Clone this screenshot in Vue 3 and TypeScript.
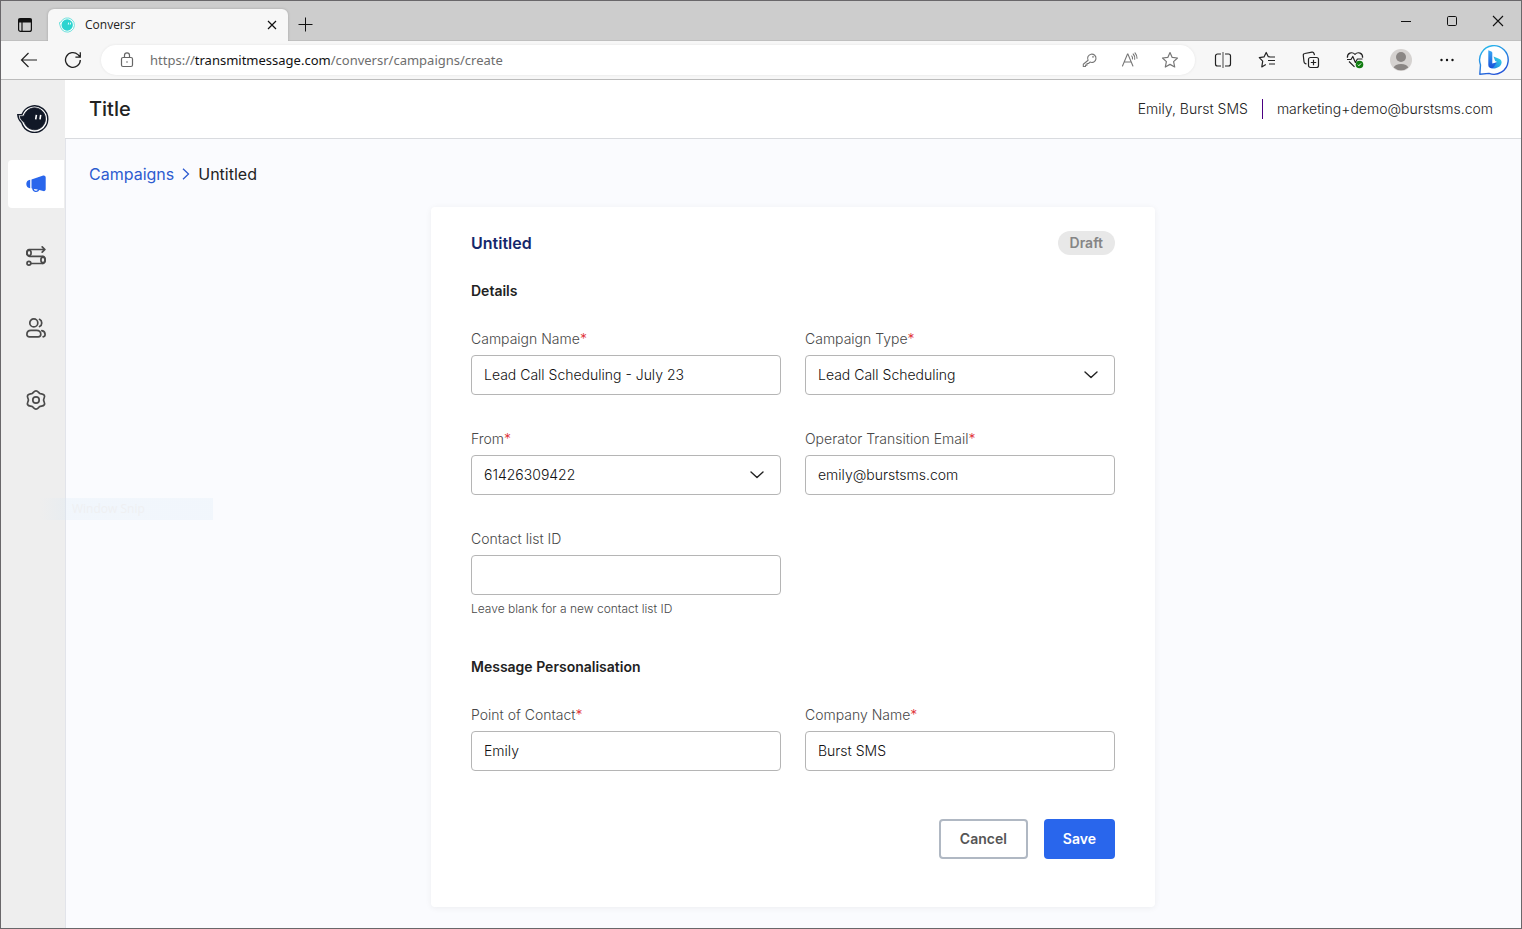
<script setup lang="ts">
import { ref } from 'vue'

interface Field {
  id: string
  label: string
  required: boolean
  kind: 'text' | 'email' | 'select'
  value: string
  hint?: string
}

interface Section {
  title: string
  fields: Field[]
}

const sections = ref<Section[]>([
  {
    title: 'Details',
    fields: [
      { id: 'campaign-name', label: 'Campaign Name', required: true, kind: 'text', value: 'Lead Call Scheduling - July 23' },
      { id: 'campaign-type', label: 'Campaign Type', required: true, kind: 'select', value: 'Lead Call Scheduling' },
      { id: 'from', label: 'From', required: true, kind: 'select', value: '61426309422' },
      { id: 'operator-email', label: 'Operator Transition Email', required: true, kind: 'email', value: 'emily@burstsms.com' },
      { id: 'contact-list', label: 'Contact list ID', required: false, kind: 'text', value: '', hint: 'Leave blank for a new contact list ID' },
    ],
  },
  {
    title: 'Message Personalisation',
    fields: [
      { id: 'contact', label: 'Point of Contact', required: true, kind: 'text', value: 'Emily' },
      { id: 'company', label: 'Company Name', required: true, kind: 'text', value: 'Burst SMS' },
    ],
  },
])
</script>

<template>
  <div class="window">
    <div class="titlebar">
      <button class="icon-btn tab-actions" aria-label="Tab actions">
        <svg width="14" height="14" viewBox="0 0 14 14" fill="none" stroke="#111" stroke-width="1.2">
          <rect x=".6" y=".6" width="12.8" height="12.8" rx="2" />
          <path d="M1 1h12v3H1z" fill="#111" />
          <path d="M4 4v9.4" />
        </svg>
      </button>
      <div class="tab">
        <svg width="16" height="16" viewBox="0 0 16 16">
          <path d="M.3 5.600 1.800 5.200A7.100 7.100 0 1 1 1.500 10Z" fill="#fff" stroke="#5fdcd8" stroke-width=".9" />
          <circle cx="8.200" cy="8" r="5.700" fill="#2bd4d0" />
          <path d="m9.600 5.600-.3 2M11.600 5.600l-.3 2" stroke="#fff" stroke-width=".9" />
        </svg>
        <span class="tab-title">Conversr</span>
        <button class="icon-btn" aria-label="Close tab">
          <svg width="10" height="10" viewBox="0 0 10 10" stroke="#111" stroke-width="1.200"><path d="m1 1 8 8M9 1 1 9" /></svg>
        </button>
      </div>
      <button class="icon-btn new-tab" aria-label="New tab">
        <svg width="15" height="15" viewBox="0 0 15 15" stroke="#111"><path d="M7.500 0.500v14M.5 7.500h14" /></svg>
      </button>
      <div class="window-controls">
        <button class="icon-btn" aria-label="Minimise">
          <svg width="12" height="12" viewBox="0 0 12 12" stroke="#111"><path d="M1 6.500h10" /></svg>
        </button>
        <button class="icon-btn" aria-label="Maximise">
          <svg width="12" height="12" viewBox="0 0 12 12" fill="none" stroke="#111"><rect x="1.500" y="1.500" width="9" height="9" rx="1.200" /></svg>
        </button>
        <button class="icon-btn" aria-label="Close window">
          <svg width="12" height="12" viewBox="0 0 12 12" stroke="#111" stroke-width="1.100"><path d="m1 1 10 10M11 1 1 11" /></svg>
        </button>
      </div>
    </div>

    <div class="toolbar">
      <button class="icon-btn back" aria-label="Back">
        <svg width="18" height="16" viewBox="0 0 18 16" fill="none" stroke="#222" stroke-width="1.200"><path d="M17 8H1.500M8.500 1 1.500 8l7 7" /></svg>
      </button>
      <button class="icon-btn reload" aria-label="Refresh">
        <svg width="18" height="18" viewBox="0 0 18 18" fill="none" stroke="#222" stroke-width="1.300"><path d="M16.300 9A7.400 7.400 0 1 1 14 3.600l2 2.200M16.300 1.200v4.900h-4.900" /></svg>
      </button>
      <div class="address">
        <button class="icon-btn lock" aria-label="Site information">
          <svg width="14" height="16" viewBox="0 0 14 16" fill="none" stroke="#666" stroke-width="1.200">
            <rect x="1.500" y="5.500" width="11" height="9" rx="1.500" />
            <path d="M4.500 5.500V3.300a2.500 2.500 0 0 1 5 0v2.200" />
            <circle cx="7" cy="10" r=".8" fill="#666" stroke="none" />
          </svg>
        </button>
        <div class="url" role="textbox" tabindex="0" aria-label="Address">https://<b>transmitmessage.com</b>/conversr/campaigns/create</div>
        <button class="icon-btn" aria-label="Passwords">
          <svg width="16" height="16" viewBox="0 0 16 16" fill="none" stroke="#777" stroke-width="1.100" stroke-linejoin="round">
            <path d="M6.100 8.300A4.200 4.200 0 1 1 8 10.100L6.500 11.500H5v1.600H3.500v1.400H1.300v-2.300z" />
            <circle cx="11" cy="4.900" r=".8" fill="#777" stroke="none" />
          </svg>
        </button>
        <button class="icon-btn" aria-label="Read aloud">
          <svg width="18" height="16" viewBox="0 0 18 16" fill="none" stroke="#777" stroke-width="1.100" stroke-linecap="round">
            <path d="M1.500 14 6.500 2h.4l5 12M3.300 10h6.800M10.800 4a4 4 0 0 1 .7 3M12.200 2a6 6 0 0 1 1.500 5.300M14 .8a8 8 0 0 1 2 5.400" />
          </svg>
        </button>
        <button class="icon-btn" aria-label="Add to favourites">
          <svg width="18" height="18" viewBox="0 0 18 18" fill="none" stroke="#777" stroke-width="1.200" stroke-linejoin="round"><path d="m9 1.500 2.200 4.900 5.300.6-3.900 3.600 1.100 5.400L9 13.400 4.300 16l1.100-5.400L1.500 7l5.300-.6z" /></svg>
        </button>
      </div>
      <div class="tools">
        <button class="icon-btn" aria-label="Split screen">
          <svg width="18" height="18" viewBox="0 0 18 18" fill="none" stroke="#222" stroke-width="1.200"><path d="M7 3H3.500a2 2 0 0 0-2 2v8a2 2 0 0 0 2 2H7M11 3h3.500a2 2 0 0 1 2 2v8a2 2 0 0 1-2 2H11" /><path d="M9 1v16" stroke="#666" /></svg>
        </button>
        <button class="icon-btn" aria-label="Favourites">
          <svg width="18" height="18" viewBox="0 0 18 18" fill="none" stroke="#222" stroke-width="1.200" stroke-linejoin="round"><path d="M12 5.900 10.300 5.700 8.200 1.500 6 5.900l-4.700.7 3.400 3.600-.9 5.700 4-2.300M11 6h6M10 9.500h7M11 13h6" /></svg>
        </button>
        <button class="icon-btn" aria-label="Collections">
          <svg width="18" height="18" viewBox="0 0 18 18" fill="none" stroke="#222" stroke-width="1.200"><rect x="6.500" y="6.500" width="10" height="10" rx="2" /><path d="M11.500 8.800v5.400M8.800 11.500h5.400M4.500 13 3.400 12.600A2 2 0 0 1 2 10.800L1.300 4.500a1.700 1.700 0 0 1 1.500-2L10 1.200a1.800 1.800 0 0 1 2 1.300l.5 1.700" /></svg>
        </button>
        <button class="icon-btn" aria-label="Browser essentials">
          <svg width="18" height="18" viewBox="0 0 18 18" fill="none" stroke="#222" stroke-width="1.200" stroke-linejoin="round">
            <path d="M1.400 6.800C1 2 6 .3 9 3.300c3-3 8-1.300 7.600 3.500M3 10.500l5.500 5.400" />
            <path d="M1 8.500h4l1.800-3 2.600 6 2-3.500h5.100" />
            <circle cx="13.500" cy="13.500" r="3.800" fill="#107c10" stroke="none" />
            <path d="m11.900 13.700 1 1 2.200-2.300" stroke="#fff" stroke-width="1" />
          </svg>
        </button>
        <button class="icon-btn profile" aria-label="Profile">
          <svg width="22" height="22" viewBox="0 0 22 22">
            <circle cx="11" cy="11" r="11" fill="#d5d2d0" />
            <circle cx="11" cy="8" r="5" fill="#8a8684" />
            <path d="M3.700 18.500a7.500 4.600 0 0 1 14.600 0A11 11 0 0 1 3.700 18.500" fill="#8a8684" />
          </svg>
        </button>
        <button class="icon-btn" aria-label="Settings and more">
          <svg width="16" height="4" viewBox="0 0 16 4" fill="#111"><circle cx="2.500" cy="2" r="1.200" /><circle cx="8" cy="2" r="1.200" /><circle cx="13.500" cy="2" r="1.200" /></svg>
        </button>
        <button class="icon-btn bing" aria-label="Bing">
          <svg width="32" height="32" viewBox="0 0 32 32">
            <defs>
              <linearGradient id="bubble" x1="0" y1="0" x2=".5" y2="1"><stop offset="0" stop-color="#2bc4ee" /><stop offset="1" stop-color="#2456d8" /></linearGradient>
              <linearGradient id="stem" x1="0" y1="0" x2="0" y2="1"><stop offset="0" stop-color="#37a9f5" /><stop offset="1" stop-color="#1b4fd8" /></linearGradient>
              <linearGradient id="bowl" x1="1" y1="0" x2="0" y2="1"><stop offset="0" stop-color="#35dbe0" /><stop offset="1" stop-color="#1e72ea" /></linearGradient>
            </defs>
            <path d="M1.800 30.300 2.500 21A14.300 14.300 0 1 1 11 29.400Z" fill="#fff" stroke="url(#bubble)" stroke-width="1.400" stroke-linejoin="round" />
            <path d="M15.500 12.500 21 14.700a4 4 0 0 1 2.300 5.300c-1.300 3.500-6.500 5.200-9.800 4.300l-3-2 8.700-4.200-2-1z" fill="url(#bowl)" />
            <path d="m10.300 6.200 3 1.300a1.500 1.500 0 0 1 1 1.500v10.500l4.700-1.300-3.700 5.300c-2 1.500-5 .3-5-2.500z" fill="url(#stem)" />
          </svg>
        </button>
      </div>
    </div>

    <div class="app">
      <nav class="sidebar" aria-label="Main">
        <a class="logo" href="#" aria-label="Conversr home">
          <svg width="32" height="28" viewBox="0 0 32 28">
            <path d="M.8 9.700 5 9.500A13.300 13.300 0 1 1 4.700 17.800C2.300 15.500 1 12.700.8 9.700Z" fill="#fff" stroke="#111827" stroke-width="1.400" />
            <path d="M3 11.400 7 11A10.900 11 0 1 1 7.200 17.300C4.900 15.800 3.500 13.800 3 11.400Z" fill="#111827" stroke="#111827" stroke-width=".8" />
            <path d="m19.400 9.800-.7 4.500M23.700 9.800l-.7 4.500" stroke="#fff" stroke-width="1.600" />
          </svg>
        </a>
        <a class="nav-item active" href="#" aria-label="Campaigns">
          <svg width="20" height="20" viewBox="0 0 20 20" fill="#2966ec">
            <path d="M4.200 5.700v8.500C1.700 14 .3 12.300.3 10s1.400-4.200 3.900-4.300Z" />
            <path d="m5.500 5.500 11.700-3.900c1.300-.3 2.500.6 2.500 1.900v11.800c0 1.300-1.200 2.200-2.500 1.800l-3.800-1.200A3.800 3.800 0 0 1 6.200 14.500l-.7-.2z" />
            <path d="M7.900 14.900a2 2 0 0 0 3.900.5Z" fill="#fff" />
          </svg>
        </a>
        <a class="nav-item" href="#" aria-label="Flows">
          <svg width="20" height="20" viewBox="0 0 20 20" fill="none" stroke="#4a4a4a" stroke-width="1.700" stroke-linecap="round" stroke-linejoin="round">
            <path d="M3.500 3.500h15M16.200.9l2.700 2.600-2.700 2.700M3.500 10.300h13M5 17.500h11.500" />
            <ellipse cx="3" cy="6.900" rx="2.100" ry="2.700" />
            <ellipse cx="17" cy="13.900" rx="2.100" ry="2.700" />
            <path d="M3 3.600Q.9 4.300.9 7T3 10.200M17 10.400q2.100.7 2.100 3.500T17 17.400" />
            <circle cx="2.900" cy="17.200" r="1.900" />
          </svg>
        </a>
        <a class="nav-item" href="#" aria-label="Contacts">
          <svg width="20" height="20" viewBox="0 0 20 20" fill="none" stroke="#4a4a4a" stroke-width="1.700" stroke-linecap="round">
            <circle cx="7.800" cy="4.900" r="4" />
            <path d="M13.500 1.300a4 4 0 0 1 0 7.200M5 12.300h5.600c2.600 0 4.200 1.700 4.200 4 0 1.700-1 2.500-2.600 2.500H3.400C1.800 18.800.9 18 .9 16.300c0-2.300 1.500-4 4.100-4ZM15.800 12.600c2 .4 3.300 1.800 3.300 3.900 0 1.500-.8 2.200-2 2.300" />
          </svg>
        </a>
        <a class="nav-item" href="#" aria-label="Settings">
          <svg width="20" height="20" viewBox="0 0 20 20" fill="none" stroke="#4a4a4a" stroke-width="1.700" stroke-linejoin="round">
            <path d="M6.200 3.400C7.500 2.650 8 .9 10 .9S12.500 2.650 13.800 3.400C15.100 4.160 17.300 3.600 18.300 5.300S17.600 8.500 17.600 10C17.600 11.500 19.300 13 18.300 14.700S15.100 15.840 13.800 16.600C12.500 17.350 12 19.100 10 19.100S7.500 17.350 6.200 16.600C4.900 15.840 2.700 16.400 1.700 14.700S2.400 11.500 2.400 10C2.400 8.500.7 7 1.700 5.300S4.900 4.160 6.200 3.400Z" />
            <circle cx="10" cy="10" r="3.200" />
          </svg>
        </a>
      </nav>

      <div class="content">
        <header class="header">
          <h1>Title</h1>
          <div class="account">
            <span>Emily, Burst SMS</span>
            <span class="divider"></span>
            <span>marketing+demo@burstsms.com</span>
          </div>
        </header>

        <main class="main">
          <nav class="breadcrumb" aria-label="Breadcrumb">
            <a href="#">Campaigns</a>
            <svg width="8" height="12" viewBox="0 0 8 12" fill="none" stroke="#2d5bd0" stroke-width="1.300"><path d="m1 .8 5.500 5.200L1 11.200" /></svg>
            <span>Untitled</span>
          </nav>

          <form class="card" @submit.prevent>
            <div class="card-head">
              <h2>Untitled</h2>
              <span class="badge">Draft</span>
            </div>
            <section v-for="section in sections" :key="section.title">
              <h3>{{ section.title }}</h3>
              <div class="fields">
                <div v-for="field in section.fields" :key="field.id" class="field">
                  <label :for="field.id">{{ field.label }}<span v-if="field.required" class="star">*</span></label>
                  <div v-if="field.kind === 'select'" class="select">
                    <select :id="field.id" v-model="field.value">
                      <option>{{ field.value }}</option>
                    </select>
                    <svg width="14" height="8" viewBox="0 0 14 8" fill="none" stroke="#222" stroke-width="1.400" stroke-linecap="round" stroke-linejoin="round"><path d="m1 1 6 5.500L13 1" /></svg>
                  </div>
                  <input v-else :id="field.id" v-model="field.value" :type="field.kind" />
                  <p v-if="field.hint" class="hint">{{ field.hint }}</p>
                </div>
              </div>
            </section>
            <div class="actions">
              <button type="button" class="btn cancel">Cancel</button>
              <button type="submit" class="btn save">Save</button>
            </div>
          </form>
        </main>
      </div>
    </div>
    <div class="snip">Window Snip</div>
  </div>
</template>

<style>
body {
  margin: 0;
}
</style>

<style scoped>
* {
  box-sizing: border-box;
}
.window {
  position: relative;
  display: flex;
  flex-direction: column;
  min-height: 100vh;
  border: 1px solid #69676a;
  background: #fafbfe;
  font-family: Inter, "Liberation Sans", sans-serif;
  color: #222;
}
svg {
  display: block;
  flex: none;
}
.icon-btn {
  display: flex;
  align-items: center;
  justify-content: center;
  flex: none;
  padding: 0;
  border: 0;
  background: none;
}
.titlebar {
  display: flex;
  height: 40px;
  padding-top: 8px;
  border-bottom: 1px solid #c0c0c0;
  background: #cdcdcd;
}
.tab-actions {
  width: 47px;
}
.tab {
  display: flex;
  align-items: center;
  width: 240px;
  height: 32px;
  padding: 0 11px;
  border-radius: 6px 6px 0 0;
  background: #f7f7f7;
  box-shadow: 0 0 3px rgba(0, 0, 0, 0.2);
  clip-path: inset(-3px -3px 0 -3px);
}
.tab-title {
  flex: 1;
  padding-left: 10px;
  font: 12px/16px "Open Sans", sans-serif;
  color: #222;
}
.new-tab {
  width: 35px;
}
.window-controls {
  display: flex;
  height: 24px;
  margin-left: auto;
}
.window-controls .icon-btn {
  width: 46px;
}
.toolbar {
  display: flex;
  align-items: center;
  height: 39px;
  border-bottom: 1px solid #bcbcbc;
  background: #f7f7f7;
}
.back {
  width: 44px;
  margin-left: 6px;
}
.reload {
  width: 44px;
}
.address {
  display: flex;
  flex: 1;
  align-items: center;
  height: 30px;
  margin-left: 6px;
  padding: 0 5px 0 19px;
  border-radius: 15px;
  background: #fff;
  box-shadow: 0 0 3px rgba(0, 0, 0, 0.08);
}
.address .icon-btn {
  width: 40px;
}
.address .lock {
  width: 14px;
}
.url {
  flex: 1;
  padding-left: 16px;
  font: 13px/20px "Noto Sans", sans-serif;
  color: #6e6e6e;
}
.url b {
  font-weight: 400;
  color: #111;
}
.tools {
  display: flex;
  align-items: center;
  margin-left: 6px;
}
.tools .icon-btn {
  width: 44px;
}
.tools .profile {
  width: 48px;
}
.tools .bing {
  width: 52px;
  padding-right: 2px;
}
.app {
  display: flex;
  flex: 1;
}
.sidebar {
  display: flex;
  flex-direction: column;
  gap: 24px;
  flex: none;
  width: 65px;
  padding: 25px 0 0 7px;
  border-right: 1px solid #e2e4ea;
  background: #eee;
}
.logo {
  width: 32px;
  margin: 0 0 3px 9px;
}
.nav-item {
  display: flex;
  align-items: center;
  justify-content: center;
  width: 56px;
  height: 48px;
  border-radius: 4px 0 0 4px;
}
.nav-item.active {
  background: #fff;
}
.content {
  flex: 1;
  min-width: 0;
}
.header {
  display: flex;
  align-items: center;
  justify-content: space-between;
  height: 59px;
  margin-left: -1px;
  padding: 0 28px 0 24px;
  border-bottom: 1px solid #d9dbdf;
  background: #fff;
}
h1,
h2,
h3,
p {
  margin: 0;
}
h1 {
  font-size: 20px;
  line-height: 24px;
  font-weight: 500;
  color: #222;
}
.account {
  display: flex;
  align-items: center;
  gap: 14px;
  font-size: 14px;
  line-height: 20px;
  font-weight: 300;
}
.divider {
  width: 1px;
  height: 20px;
  background: #4b0082;
}
.main {
  padding: 24px 24px 21px 23px;
}
.breadcrumb {
  display: flex;
  align-items: center;
  gap: 8px;
  margin-bottom: 22px;
  font-size: 16px;
  line-height: 22px;
}
.breadcrumb a {
  color: #2d5bd0;
  text-decoration: none;
}
.card {
  max-width: 724px;
  margin: 0 auto;
  padding: 24px 40px 48px;
  border-radius: 4px;
  background: #fff;
  box-shadow: 0 1px 6px rgba(0, 0, 0, 0.06);
}
.card-head {
  display: flex;
  align-items: center;
  justify-content: space-between;
  margin-bottom: 24px;
}
h2 {
  font-size: 16px;
  line-height: 24px;
  font-weight: 600;
  color: #14286b;
}
.badge {
  padding: 0 12px;
  border-radius: 12px;
  background: #e8e8e8;
  font-size: 14px;
  line-height: 24px;
  font-weight: 600;
  color: #858585;
}
h3 {
  margin-bottom: 28px;
  font-size: 14px;
  line-height: 24px;
  font-weight: 600;
  color: #222;
}
section + section {
  margin-top: 38px;
}
.fields {
  display: grid;
  grid-template-columns: repeat(2, minmax(0, 1fr));
  gap: 36px 24px;
}
.field label {
  display: block;
  margin-bottom: 8px;
  font-size: 14px;
  line-height: 16px;
  font-weight: 300;
  color: #484848;
}
.star {
  color: #e02f35;
}
.field input,
.field select {
  display: block;
  width: 100%;
  height: 40px;
  padding: 0 12px;
  border: 1px solid #b5b5b5;
  border-radius: 4px;
  outline: 0;
  background: #fff;
  font: 300 14px/20px Inter, "Liberation Sans", sans-serif;
  color: #111;
  appearance: none;
}
.field input {
  padding-bottom: 2px;
}
.select {
  position: relative;
}
.select svg {
  position: absolute;
  top: 16px;
  right: 17px;
  pointer-events: none;
}
.hint {
  margin-top: 6px;
  font-size: 12px;
  line-height: 16px;
  font-weight: 300;
  color: #484848;
}
.actions {
  display: flex;
  justify-content: flex-end;
  gap: 16px;
  margin-top: 48px;
}
.btn {
  height: 40px;
  padding: 0 19px;
  border: 0;
  border-radius: 4px;
  font: 600 14px/20px Inter, "Liberation Sans", sans-serif;
}
.cancel {
  border: 2px solid #b0b8c3;
  background: #fff;
  color: #555;
}
.save {
  background: #2966ec;
  color: #fff;
}
.snip {
  position: absolute;
  top: 497px;
  left: 39px;
  width: 173px;
  height: 22px;
  padding-left: 32px;
  background: linear-gradient(90deg, rgba(215, 232, 246, 0), rgba(215, 232, 246, 0.25) 26px);
  font: 12px/22px "Open Sans", sans-serif;
  color: #eff0f2;
  pointer-events: none;
}
</style>
